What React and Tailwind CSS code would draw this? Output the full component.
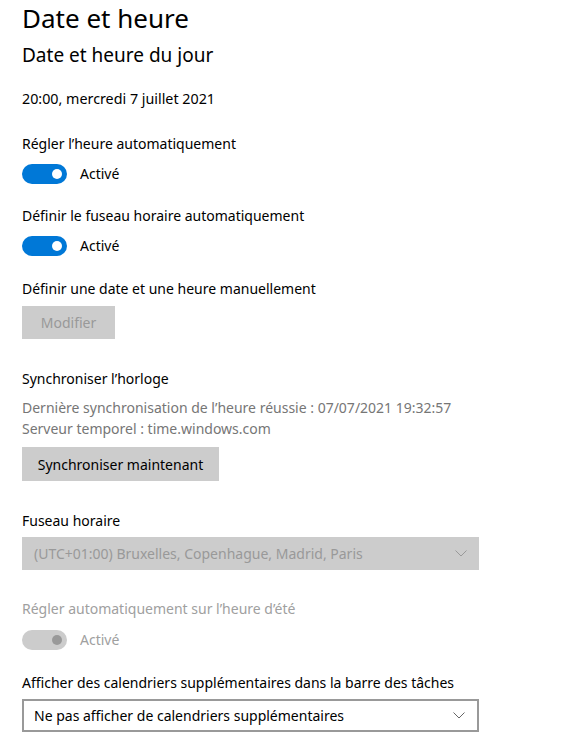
import React from 'react';

const font = { fontFamily: '"Noto Sans", "Open Sans", sans-serif' };

const Toggle = ({ disabled, className }) => (
  <div className={`flex h-5 items-center ${className}`}>
    <div
      className={`flex h-5 w-[45px] items-center justify-end rounded-full pr-[5px] ${
        disabled ? 'bg-[#cccccc]' : 'bg-[#0078d7]'
      }`}
    >
      <div className={`h-[10px] w-[10px] rounded-full ${disabled ? 'bg-[#999999]' : 'bg-white'}`} />
    </div>
    <span className={`ml-[13px] text-[14px] leading-5 ${disabled ? 'text-[#a0a0a0]' : 'text-black'}`}>Activé</span>
  </div>
);

const Chevron = ({ color }) => (
  <svg width="12" height="7" viewBox="0 0 12 7" fill="none" className="mr-[12px]">
    <path d="M0.5 0.5 L6 6 L11.5 0.5" stroke={color} strokeWidth="1" />
  </svg>
);

export default function App() {
  return (
    <div className="min-h-screen bg-white pl-[22px] text-black" style={font}>
      <h1 className="text-[26px] leading-9 font-normal">Date et heure</h1>
      <h2 className="mt-[5px] text-[19px] leading-7 font-normal">Date et heure du jour</h2>
      <p className="mt-5 text-[14.3px] leading-5">20:00, mercredi 7 juillet 2021</p>

      <p className="mt-6 pt-px text-[14px] leading-5">Régler l’heure automatiquement</p>
      <Toggle className="mt-[10px]" />

      <p className="mt-[21px] pt-px text-[14px] leading-5">Définir le fuseau horaire automatiquement</p>
      <Toggle className="mt-[10px]" />

      <p className="mt-[22px] pt-px text-[14px] leading-5">Définir une date et une heure manuellement</p>
      <button className="mt-[7px] block h-[33px] w-[93px] bg-[#cccccc] text-[14px] text-[#999999]">Modifier</button>

      <p className="mt-[29px] pt-px text-[14px] leading-5">Synchroniser l’horloge</p>
      <div className="mt-[8px] text-[14px] leading-[21px] text-[#767676]">
        <p>Dernière synchronisation de l’heure réussie : 07/07/2021 19:32:57</p>
        <p>Serveur temporel : time.windows.com</p>
      </div>
      <button className="mt-[8px] block h-[34px] w-[197px] bg-[#cccccc] text-[14px] text-black">Synchroniser maintenant</button>

      <p className="mt-[29px] pt-px text-[14px] leading-5">Fuseau horaire</p>
      <div className="mt-[6px] flex h-[33px] w-[457px] items-center justify-between bg-[#cccccc] pl-[12px] text-[14px] text-[#999999]">
        <span>(UTC+01:00) Bruxelles, Copenhague, Madrid, Paris</span>
        <Chevron color="#999999" />
      </div>

      <p className="mt-[28px] pt-px text-[14px] leading-5 text-[#a0a0a0]">Régler automatiquement sur l’heure d’été</p>
      <Toggle disabled className="mt-[11px]" />

      <p className="mt-[22px] pt-px text-[14px] leading-5">Afficher des calendriers supplémentaires dans la barre des tâches</p>
      <div className="mt-[6px] flex h-[33px] w-[457px] items-center justify-between border-2 border-[#999999] pl-[10px] text-[14px] text-black">
        <span>Ne pas afficher de calendriers supplémentaires</span>
        <Chevron color="#666666" />
      </div>
    </div>
  );
}
